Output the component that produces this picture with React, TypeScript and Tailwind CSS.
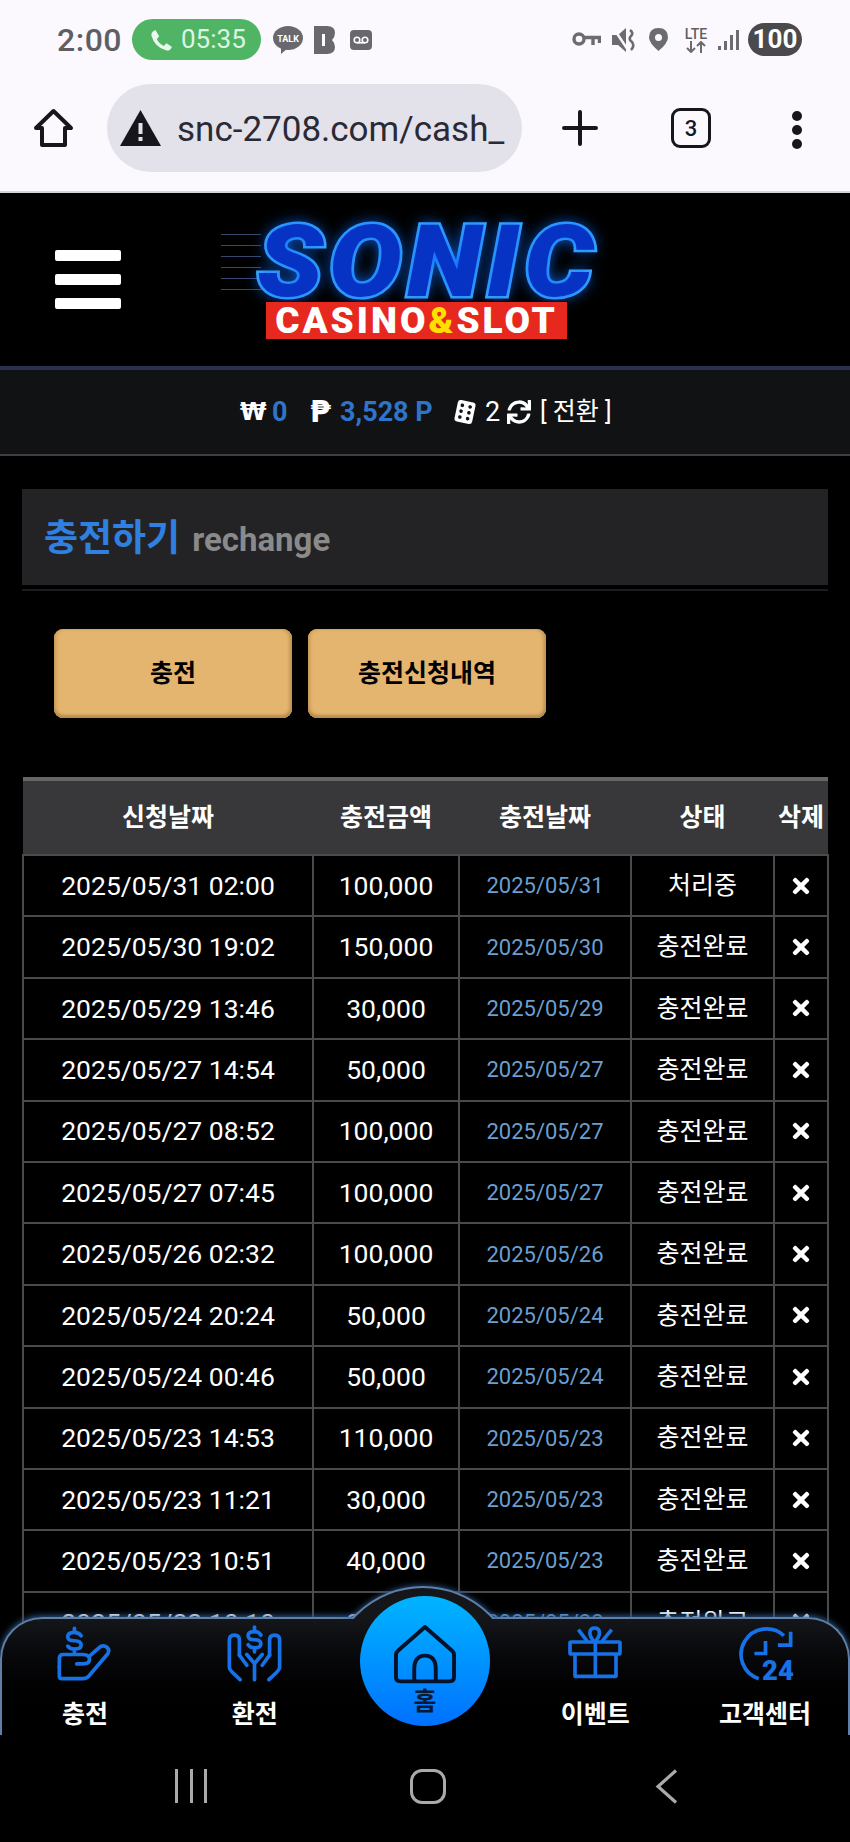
import React from 'react';
import { FaSync, FaTimes } from 'react-icons/fa';

const rows = [
  ['2025/05/31 02:00', '100,000', '2025/05/31', '처리중'],
  ['2025/05/30 19:02', '150,000', '2025/05/30', '충전완료'],
  ['2025/05/29 13:46', '30,000', '2025/05/29', '충전완료'],
  ['2025/05/27 14:54', '50,000', '2025/05/27', '충전완료'],
  ['2025/05/27 08:52', '100,000', '2025/05/27', '충전완료'],
  ['2025/05/27 07:45', '100,000', '2025/05/27', '충전완료'],
  ['2025/05/26 02:32', '100,000', '2025/05/26', '충전완료'],
  ['2025/05/24 20:24', '50,000', '2025/05/24', '충전완료'],
  ['2025/05/24 00:46', '50,000', '2025/05/24', '충전완료'],
  ['2025/05/23 14:53', '110,000', '2025/05/23', '충전완료'],
  ['2025/05/23 11:21', '30,000', '2025/05/23', '충전완료'],
  ['2025/05/23 10:51', '40,000', '2025/05/23', '충전완료'],
  ['2025/05/22 10:10', '20,000', '2025/05/22', '충전완료'],
];

function StatusBar() {
  return (
    <div className="flex h-[78px] items-center pl-[57px] pr-[48px] pt-[1px] text-[#5f5f63]">
      <span className="w-[75px] text-[32px] font-medium tracking-[0.5px]">2:00</span>
      <div className="flex h-[41px] w-[129px] items-center rounded-full bg-[#4fb565] pl-[18px] text-[26px] text-[#dcf5e2]">
        <svg width="22" height="24" viewBox="0 0 24 24" fill="#e8f8ec">
          <path d="M6 1 L10 8 L7.5 11 Q9.5 16 15 18.5 L18 15.5 L24 19.5 Q22 24 18 23.5 Q5 20 1.5 7 Q1 3 6 1Z" />
        </svg>
        <span className="ml-[9px]">05:35</span>
      </div>
      <svg className="ml-[12px]" width="30" height="28" viewBox="0 0 30 28">
        <ellipse cx="15" cy="12" rx="15" ry="12" fill="#69696d" />
        <path d="M8 20 L8 28 L15 22Z" fill="#69696d" />
        <text x="15" y="15.5" textAnchor="middle" fontSize="9" fontWeight="700" fill="#fff" fontFamily="Roboto">TALK</text>
      </svg>
      <svg className="ml-[11px]" width="21" height="28" viewBox="0 0 21 28">
        <path d="M0 0 H13 Q21 0 21 7 Q21 11 18 14 Q21 17 21 21 Q21 28 13 28 H0Z" fill="#69696d" />
        <rect x="8" y="8" width="3" height="12" fill="#fff" />
      </svg>
      <div className="ml-[15px] flex h-[20px] w-[22px] items-center justify-center rounded-[4px] bg-[#69696d]">
        <svg width="16" height="8" viewBox="0 0 16 8" fill="none" stroke="#fff" strokeWidth="1.6">
          <circle cx="4" cy="4" r="2.8" />
          <circle cx="12" cy="4" r="2.8" />
          <path d="M4 6.8 H12" />
        </svg>
      </div>
      <div className="ml-auto flex items-center">
        <svg width="29" height="17" viewBox="0 0 29 17" fill="none" stroke="#6c6c70" strokeWidth="3.4">
          <circle cx="7" cy="8" r="5" />
          <path d="M12 6.5 H27.5 V12 M21 7 V14" />
        </svg>
        <svg className="ml-[11px]" width="24" height="24" viewBox="0 0 24 24">
          <path d="M0 7 H6 L14 0 V24 L6 17 H0Z" fill="#6c6c70" />
          <path d="M2 1 L16 22" stroke="#fbf9fe" strokeWidth="2.4" />
          <path d="M18 2 Q22 5 19 8 Q16 11 20 14 Q23 18 19 22" stroke="#6c6c70" strokeWidth="2.6" fill="none" />
        </svg>
        <svg className="ml-[13px]" width="19" height="23" viewBox="0 0 19 23">
          <path d="M9.5 0 Q19 0 19 9.5 Q19 15 9.5 23 Q0 15 0 9.5 Q0 0 9.5 0Z" fill="#6c6c70" />
          <circle cx="9.5" cy="9.5" r="3.5" fill="#fbf9fe" />
        </svg>
        <div className="ml-[15px] flex w-[26px] flex-col items-center leading-none">
          <span className="text-[14px] font-medium leading-[14px]">LTE</span>
          <svg width="22" height="12" viewBox="0 0 22 12" fill="none" stroke="#6c6c70" strokeWidth="2">
            <path d="M6 0 V10 M2 7 L6 11 L10 7 M16 12 V2 M12 5 L16 1 L20 5" />
          </svg>
        </div>
        <div className="ml-[9px] flex h-[20px] items-end gap-[3px]">
          <div className="h-[4px] w-[3px] bg-[#6c6c70]" />
          <div className="h-[9px] w-[3px] bg-[#6c6c70]" />
          <div className="h-[15px] w-[3px] bg-[#6c6c70]" />
          <div className="h-[20px] w-[3px] bg-[#6c6c70]" />
        </div>
        <div className="ml-[9px] flex h-[33px] w-[54px] items-center justify-center rounded-full bg-[#4a4a4c] text-[26px] font-bold text-white">100</div>
      </div>
    </div>
  );
}

function BrowserBar() {
  return (
    <div className="flex h-[115px] items-start border-b-2 border-[#d4d4d6] pl-[33px] pt-[6px]">
      <svg className="mt-[24px]" width="41" height="40" viewBox="0 0 41 40" fill="none" stroke="#16161c" strokeWidth="4" strokeLinejoin="round">
        <path d="M20.5 3 L38 20 H32 V37 H9 V20 H3Z" />
      </svg>
      <div className="ml-[33px] flex h-[88px] w-[415px] items-center rounded-[44px] bg-[#e3e2ea] pl-[13px]">
        <svg width="41" height="36" viewBox="0 0 41 36">
          <path d="M20.5 0 L41 36 H0Z" fill="#16161c" />
          <rect x="18.5" y="13" width="4" height="11" fill="#e3e2ea" />
          <rect x="18.5" y="27" width="4" height="4" fill="#e3e2ea" />
        </svg>
        <span className="ml-[16px] mt-[2px] whitespace-nowrap text-[35px] leading-none text-[#2a2a36]">snc-2708.com/cash_</span>
      </div>
      <svg className="ml-[40px] mt-[26px]" width="36" height="36" viewBox="0 0 36 36" stroke="#16161c" strokeWidth="4" strokeLinecap="round">
        <path d="M18 2 V34 M2 18 H34" />
      </svg>
      <div className="ml-[73px] mt-[24px] flex h-[40px] w-[40px] items-center justify-center rounded-[9px] border-[3.5px] border-[#16161c] text-[22px] font-medium text-[#16161c]">3</div>
      <div className="ml-[81px] mt-[27px] flex flex-col gap-[4px]">
        <div className="h-[10px] w-[10px] rounded-full bg-[#16161c]" />
        <div className="h-[10px] w-[10px] rounded-full bg-[#16161c]" />
        <div className="h-[10px] w-[10px] rounded-full bg-[#16161c]" />
      </div>
    </div>
  );
}

function Logo() {
  return (
    <div className="ml-[145px] flex w-[330px] flex-col items-start">
      <div className="relative ml-[-9px] flex h-[83px] items-center">
        <div className="absolute left-[-36px] top-[14px] h-[66px] w-[40px] bg-[repeating-linear-gradient(180deg,#39476e_0px,#39476e_1px,transparent_1px,transparent_11px)]" />
        <span className="relative origin-left scale-x-[1.09] whitespace-nowrap font-['Roboto',sans-serif] text-[100px] font-black italic leading-[78px] tracking-[5px] text-[#0733c4] [-webkit-text-stroke:5px_#3fb0ff] [paint-order:stroke_fill] [text-shadow:0_0_14px_#0b6bff]">SONIC</span>
      </div>
      <div className="relative mt-[-1px] flex h-[37px] w-[301px] items-center justify-center whitespace-nowrap bg-[#e6281e] font-['Roboto',sans-serif] text-[37px] font-black tracking-[3px] text-white">
        CASINO<span className="text-[#ffdf00]">&amp;</span>SLOT
      </div>
    </div>
  );
}

function Balance() {
  return (
    <div className="flex h-[86px] items-center border-b-2 border-[#3f3f41] bg-[#111214] pl-[240px] text-[27px] text-white">
      <span className="w-[32px] font-['DejaVu_Sans',sans-serif] text-[24px] font-bold">₩</span>
      <span className="w-[38px] font-bold text-[#2f74c8]">0</span>
      <span className="w-[30px] font-['DejaVu_Sans',sans-serif] text-[30px] font-bold leading-none">₱</span>
      <span className="w-[112px] whitespace-nowrap font-bold text-[#2f74c8]">3,528 P</span>
      <div className="w-[33px]">
        <svg width="26" height="26" viewBox="0 0 26 26">
          <rect x="4" y="2" width="18" height="22" rx="3" fill="#fff" transform="rotate(12 13 13)" />
          <g fill="#111214" transform="rotate(12 13 13)">
            <circle cx="9" cy="7" r="1.8" />
            <circle cx="17" cy="7" r="1.8" />
            <circle cx="9" cy="13" r="1.8" />
            <circle cx="17" cy="13" r="1.8" />
            <circle cx="9" cy="19" r="1.8" />
            <circle cx="17" cy="19" r="1.8" />
          </g>
        </svg>
      </div>
      <span className="w-[22px]">2</span>
      <div className="w-[33px]">
        <FaSync size={24} />
      </div>
      <span className="whitespace-nowrap text-[25px]">[ 전환 ]</span>
    </div>
  );
}

function RechargeTable() {
  return (
    <table className="mt-[59px] ml-[22px] w-[805px] table-fixed border-collapse">
      <colgroup>
        <col className="w-[290px]" />
        <col className="w-[146px]" />
        <col className="w-[172px]" />
        <col className="w-[143px]" />
        <col className="w-[54px]" />
      </colgroup>
      <thead>
        <tr className="h-[76px] border-t-4 border-[#666668] bg-[#38383a] text-[25px] font-bold text-white">
          <th>신청날짜</th>
          <th>충전금액</th>
          <th>충전날짜</th>
          <th>상태</th>
          <th>삭제</th>
        </tr>
      </thead>
      <tbody>
        {rows.map((r) => (
          <tr key={r[0]} className="h-[61.4px] text-center text-[26.5px] text-white">
            <td className="border-2 border-[#4a4a4c]">{r[0]}</td>
            <td className="border-2 border-[#4a4a4c]">{r[1]}</td>
            <td className="border-2 border-[#4a4a4c] text-[22px] text-[#6a9fd0]">{r[2]}</td>
            <td className="border-2 border-[#4a4a4c] text-[25px]">{r[3]}</td>
            <td className="border-2 border-[#4a4a4c]">
              <FaTimes className="mx-auto text-white" size={24} />
            </td>
          </tr>
        ))}
      </tbody>
    </table>
  );
}

function ChargeIcon() {
  return (
    <svg width="57" height="57" viewBox="50 40 170 170" fill="none" stroke="#1672e6" strokeWidth="11" strokeLinecap="round" strokeLinejoin="round">
      <path d="M60 165 V140 Q60 128 72 128 H130 Q150 128 150 143 Q150 156 130 156 H112" />
      <path d="M60 165 V192 Q60 200 68 200 H130 Q142 200 150 190 L205 125 Q212 112 198 104 Q188 99 178 108 L150 133" />
      <path d="M125 72 Q118 62 105 62 Q85 62 85 75 Q85 87 105 87 Q125 87 125 100 Q125 112 105 112 Q92 112 85 103 M105 50 V62 M105 112 V126" />
    </svg>
  );
}

function ExchangeIcon() {
  return (
    <svg width="57" height="57" viewBox="560 40 170 170" fill="none" stroke="#1672e6" strokeWidth="11" strokeLinecap="round" strokeLinejoin="round">
      <path d="M600 130 V85 Q600 70 585 70 Q570 70 570 85 V165 Q570 172 578 180 L602 203" />
      <path d="M690 130 V85 Q690 70 705 70 Q720 70 720 85 V165 Q720 172 712 180 L688 203" />
      <path d="M600 130 L622 160 M690 130 L668 160 M622 128 L645 155 L668 128 M645 155 V203" />
      <path d="M664 70 Q658 60 645 60 Q626 60 626 72 Q626 84 645 84 Q664 84 664 96 Q664 108 645 108 Q632 108 626 99 M645 46 V60 M645 108 V120" />
    </svg>
  );
}

function GiftIcon() {
  return (
    <svg width="60" height="60" viewBox="45 40 180 180" fill="none" stroke="#1672e6" strokeWidth="11" strokeLinejoin="round">
      <rect x="60" y="97" width="150" height="36" rx="3" />
      <path d="M75 133 V200 H198 V133 M136 97 V200" />
      <path d="M134 97 C112 75 118 55 134 55 C150 55 156 75 134 97 M85 60 L112 95 M185 60 L156 95" />
    </svg>
  );
}

function ClockIcon() {
  return (
    <svg width="57" height="57" viewBox="560 40 170 170" fill="none" stroke="#1672e6" strokeWidth="11">
      <path d="M700 72 A76 76 0 1 0 625 200" />
      <path d="M720 60 V100 H682 M645 88 V125 H612" />
      <text x="682" y="205" textAnchor="middle" fontSize="82" fontWeight="900" fontFamily="Roboto" fill="#1672e6" stroke="none">24</text>
    </svg>
  );
}

function NavItem({ label, children }: { label: string; children: React.ReactNode }) {
  return (
    <div className="flex w-[170px] flex-col items-center pt-[6px]">
      <div className="flex h-[60px] items-center">{children}</div>
      <span className="mt-[15px] whitespace-nowrap text-[25px] font-bold leading-[34px] text-white">{label}</span>
    </div>
  );
}

function BottomNav() {
  return (
    <div className="absolute bottom-[107px] left-0 h-[118px] w-[850px]">
      <div className="absolute inset-0 rounded-t-[42px] border-x-2 border-t-2 border-b-0 border-[#5d7fa8] bg-gradient-to-b from-[#15161a] to-[#000000] shadow-[0_-1px_6px_#2f5d94]" />
      {/* bump over the bar */}
      <div className="absolute left-[330px] top-[-47px] h-[49px] w-[186px] overflow-hidden">
        <div className="absolute left-[-2px] top-[16px] h-[190px] w-[190px] rounded-full border-2 border-[#5d7fa8] bg-[#15161a] shadow-[0_0_6px_#2f5d94]" />
      </div>
      <div className="relative flex h-full items-start">
        <NavItem label="충전"><ChargeIcon /></NavItem>
        <NavItem label="환전"><ExchangeIcon /></NavItem>
        <div className="w-[171px]" />
        <NavItem label="이벤트"><GiftIcon /></NavItem>
        <NavItem label="고객센터"><ClockIcon /></NavItem>
      </div>
      <div className="absolute left-[360px] top-[-21px] flex h-[130px] w-[130px] flex-col items-center rounded-full bg-gradient-to-b from-[#00b4ff] to-[#0070ff] pt-[28px]">
        <svg width="62" height="60" viewBox="160 125 190 180" fill="none" stroke="#06122a" strokeWidth="12" strokeLinejoin="round">
          <path d="M255 132 L172 205 Q166 210 166 218 V285 Q166 299 180 299 H330 Q344 299 344 285 V218 Q344 210 338 205Z" />
          <path d="M222 299 V262 Q222 220 255 220 Q288 220 288 262 V299" />
        </svg>
        <span className="mt-[4px] text-[25px] font-bold leading-[28px] text-[#0b1a33]">홈</span>
      </div>
    </div>
  );
}

function SystemNav() {
  return (
    <div className="absolute bottom-0 left-0 flex h-[107px] w-[850px] items-start bg-black pt-[34px]">
      <div className="ml-[175px] flex h-[34px] w-[32px] justify-between">
        <div className="w-[3px] bg-[#aaaaaa]" />
        <div className="w-[3px] bg-[#aaaaaa]" />
        <div className="w-[3px] bg-[#aaaaaa]" />
      </div>
      <div className="ml-[203px] h-[35px] w-[36px] rounded-[12px] border-[3.5px] border-[#aaaaaa]" />
      <svg className="ml-[209px]" width="23" height="35" viewBox="0 0 23 35" fill="none" stroke="#aaaaaa" strokeWidth="3.2">
        <path d="M21 1.5 L3 17.5 L21 33.5" />
      </svg>
    </div>
  );
}

export default function App() {
  return (
    <div className="relative h-[1842px] w-[850px] overflow-hidden bg-black font-['Roboto','Noto_Sans_CJK_KR',sans-serif]">
      <div className="bg-[#fbf9fe]">
        <StatusBar />
        <BrowserBar />
      </div>
      <div className="flex h-[177px] items-center border-b-4 border-[#2a2f4f] pl-[55px]">
        <div className="flex w-[66px] flex-col gap-[13px]">
          <div className="h-[11px] rounded-[2px] bg-white" />
          <div className="h-[11px] rounded-[2px] bg-white" />
          <div className="h-[11px] rounded-[2px] bg-white" />
        </div>
        <Logo />
      </div>
      <Balance />
      <div className="mx-[22px] mt-[33px] border-b-2 border-[#1c1c1e] pb-[4px]">
        <div className="flex h-[96px] items-center bg-[#232325] pl-[22px]">
          <span className="mt-[4px] text-[37px] font-bold leading-[44px] text-[#2f80e0]">충전하기</span>
          <span className="ml-[12px] mt-[6px] text-[33px] font-bold leading-[44px] text-[#8a8a8a]">rechange</span>
        </div>
      </div>
      <div className="ml-[54px] mt-[38px] flex gap-[16px]">
        <div className="flex h-[89px] w-[238px] items-center justify-center rounded-[9px] bg-[#e4b56e] text-[25px] font-bold text-black shadow-[inset_0_-3px_3px_#b68c4c,inset_3px_0_3px_#d3a560,inset_-3px_0_3px_#c89a58]">충전</div>
        <div className="flex h-[89px] w-[238px] items-center justify-center rounded-[9px] bg-[#e4b56e] text-[25px] font-bold text-black shadow-[inset_0_-3px_3px_#b68c4c,inset_3px_0_3px_#d3a560,inset_-3px_0_3px_#c89a58]">충전신청내역</div>
      </div>
      <RechargeTable />
      <BottomNav />
      <SystemNav />
    </div>
  );
}
